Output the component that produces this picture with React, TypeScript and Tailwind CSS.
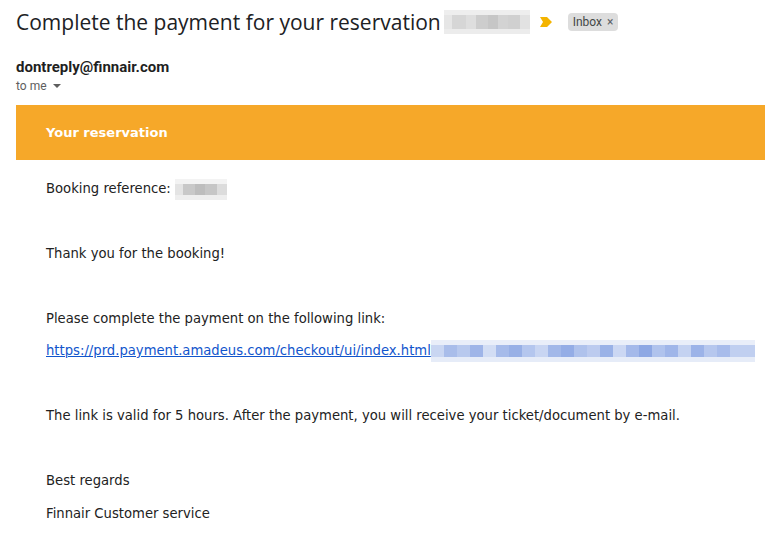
import React from "react";

const Blur = ({ cells, h, top, bottom }: { cells: { w: number; c: string }[]; h: number; top: string; bottom: string }) => (
  <span className="inline-flex flex-col align-middle">
    <span className="flex h-[5px]" style={{ background: top }} />
    <span className="flex" style={{ height: h }}>
      {cells.map((c, i) => (
        <span key={i} style={{ width: c.w, background: c.c }} />
      ))}
    </span>
    <span className="flex h-[5px]" style={{ background: bottom }} />
  </span>
);

const titleCells = [
  { w: 8, c: "#e6e6e6" },
  { w: 14, c: "#d6d6d6" },
  { w: 10, c: "#dedede" },
  { w: 12, c: "#cdcdcd" },
  { w: 10, c: "#c6c6c6" },
  { w: 10, c: "#d3d3d3" },
  { w: 12, c: "#d0d0d0" },
  { w: 10, c: "#e2e2e2" },
];

const bookCells = [
  { w: 8, c: "#e4e4e4" },
  { w: 12, c: "#c8c8c8" },
  { w: 10, c: "#bdbdbd" },
  { w: 12, c: "#c6c6c6" },
  { w: 10, c: "#dcdcdc" },
];

const linkColors = ["#c9d6f2", "#a9bdea", "#b8c9ee", "#9fb5e8", "#d2ddf4", "#a6bbea", "#98b0e6", "#b4c6ee", "#c8d5f2", "#a2b8e9", "#94ade6", "#afc2ec", "#bccbef", "#9ab2e7", "#cbd7f3", "#a4b9ea", "#8ea8e4", "#b0c3ed", "#a0b6e9", "#c4d2f1", "#9cb3e8", "#b6c7ee", "#a8bceb", "#c0cff0"];
const linkCells = linkColors.map((c, i) => ({ w: i === linkColors.length - 1 ? 324 - 13 * (linkColors.length - 1) : 13, c }));

export default function App() {
  return (
    <div className="w-[765px] h-[538px] bg-white overflow-hidden" style={{ fontFamily: "Roboto, Arial, sans-serif" }}>
      <div className="flex items-center h-[44px] pl-[16px]">
        <span className="text-[21px] text-[#202124] leading-none" style={{ fontFamily: "'Open Sans', Roboto, sans-serif" }}>
          Complete the payment for your reservation
        </span>
        <span className="ml-[3px]">
          <Blur cells={titleCells} h={14} top="#eeeeee" bottom="#ececec" />
        </span>
        <svg className="ml-[10px]" width="12" height="10" viewBox="0 0 12 10">
          <path d="M0 0 H7 L12 5 L7 10 H0 L3 5 Z" fill="#f4b400" />
        </svg>
        <span className="ml-[16px] flex items-center h-[18px] px-[5px] rounded-[4px] bg-[#dddddd] text-[12px] text-[#444746]">
          Inbox
          <span className="ml-[5px] text-[12px] text-[#5f6368]">×</span>
        </span>
      </div>
      <div className="pl-[16px] pt-[14px]">
        <div className="text-[15px] font-bold text-[#1f1f1f] leading-[18px]">dontreply@finnair.com</div>
        <div className="flex items-center text-[12px] text-[#5e5e5e] leading-[16px] mt-[2px]">
          to me
          <svg className="ml-[6px]" width="8" height="5" viewBox="0 0 8 5">
            <path d="M0 0 H8 L4 4 Z" fill="#5e5e5e" />
          </svg>
        </div>
      </div>
      <div className="ml-[16px] mt-[11px] h-[55px] bg-[#f6a829] flex items-center pl-[30px]">
        <span className="text-white font-bold text-[13px]" style={{ fontFamily: "'DejaVu Sans', Verdana, sans-serif" }}>Your reservation</span>
      </div>
      <div className="pl-[46px] text-[13.2px] text-[#222222]" style={{ fontFamily: "'DejaVu Sans', Verdana, sans-serif" }}>
        <div className="mt-[19px] flex items-center h-[20px]">
          Booking reference:&nbsp;
          <Blur cells={bookCells} h={11} top="#f3f3f3" bottom="#eeeeee" />
        </div>
        <div className="mt-[45px] h-[20px] flex items-center">Thank you for the booking!</div>
        <div className="mt-[45px] h-[20px] flex items-center">Please complete the payment on the following link:</div>
        <div className="mt-[12px] h-[20px] flex items-center">
          <span className="text-[#1155cc] underline">https://prd.payment.amadeus.com/checkout/ui/index.html</span>
          <Blur cells={linkCells} h={12} top="#e9eef9" bottom="#e6ecf8" />
        </div>
        <div className="mt-[45px] h-[20px] flex items-center">The link is valid for 5 hours. After the payment, you will receive your ticket/document by e-mail.</div>
        <div className="mt-[45px] h-[20px] flex items-center">Best regards</div>
        <div className="mt-[13px] h-[20px] flex items-center">Finnair Customer service</div>
      </div>
    </div>
  );
}
